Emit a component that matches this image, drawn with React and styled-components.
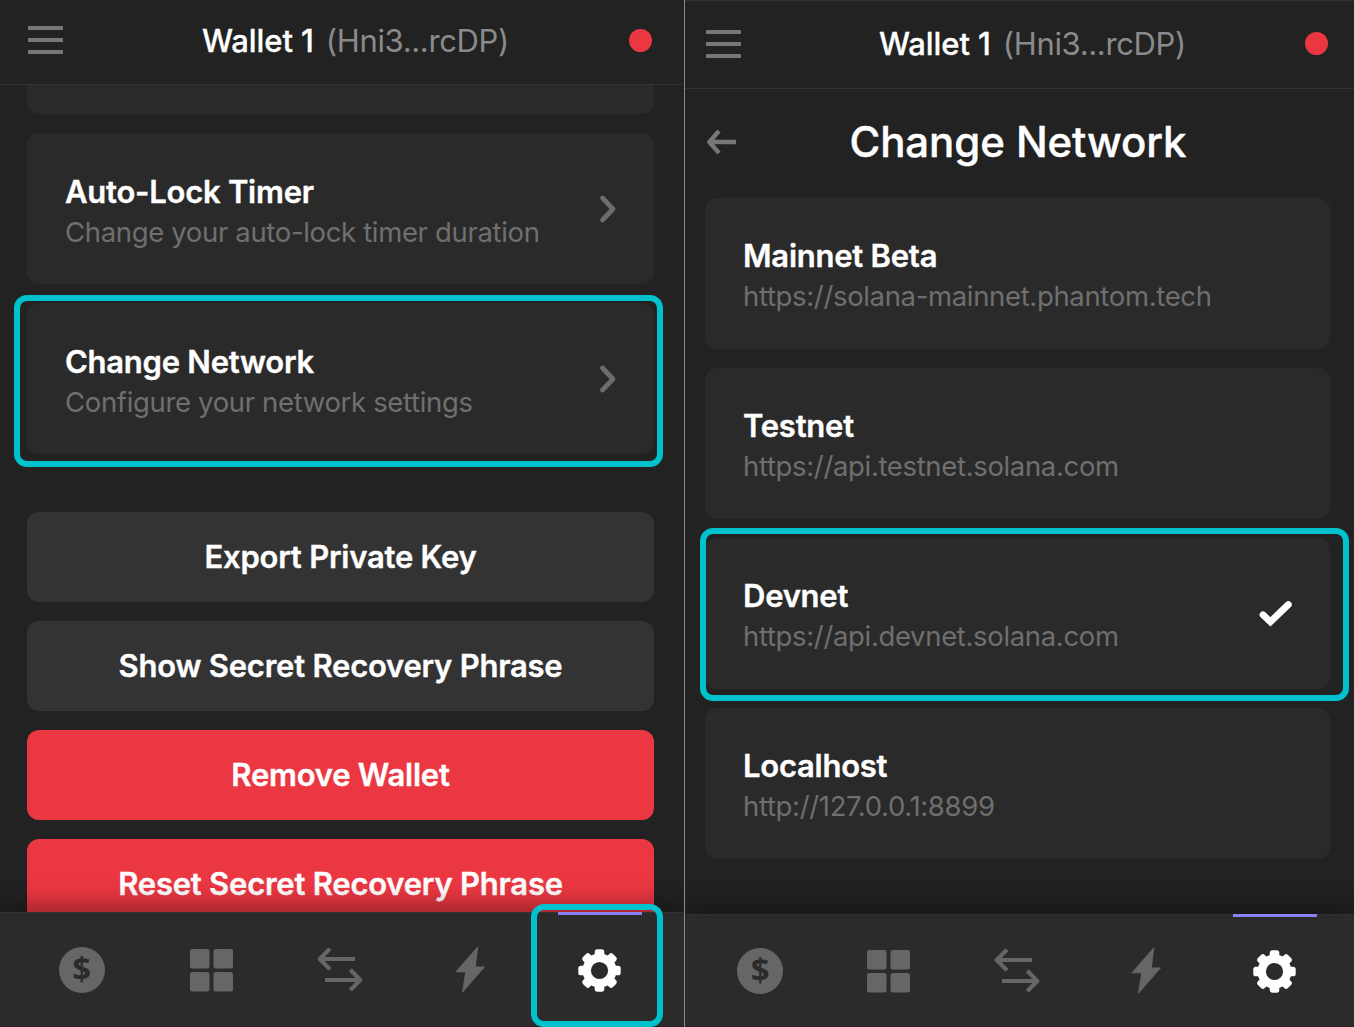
import React from 'react';
import styled, { createGlobalStyle } from 'styled-components';

const GlobalStyle = createGlobalStyle`
  * { box-sizing: border-box; }
  body { margin: 0; background: #222222; overflow: hidden; }
  h1, h2, p { margin: 0; }
  button { border: 0; padding: 0; font: inherit; }
`;

const Screen = styled.main`
  position: relative;
  display: flex;
  width: 1354px;
  height: 1027px;
  background: #222222;
  font-family: Inter, 'Liberation Sans', sans-serif;
  color: #ffffff;
`;

const Panel = styled.section`
  display: flex;
  flex-direction: column;
  width: ${(p) => p.$width}px;
  height: 1027px;
  overflow: hidden;
  border-top: ${(p) => (p.$topLine ? '1px solid #323232' : '0')};
`;

const Divider = styled.div`
  width: 1px;
  background: #8a8a8a;
`;

const Header = styled.header`
  flex: none;
  display: flex;
  align-items: center;
  justify-content: space-between;
  height: ${(p) => p.$height}px;
  padding: ${(p) => p.$padding};
  border-bottom: 1px solid #333333;
`;

const MenuButton = styled.button`
  display: flex;
  flex-direction: column;
  justify-content: space-between;
  width: 35px;
  height: 28px;
  background: none;
`;

const MenuBar = styled.span`
  height: 4px;
  border-radius: 0.5px;
  background: #777777;
`;

const WalletName = styled.div`
  display: flex;
  gap: 12px;
  margin-left: ${(p) => p.$shift}px;
  padding-top: 1px;
  font-size: 31px;
  line-height: 40px;
  font-weight: 500;
  letter-spacing: -0.1px;
  -webkit-text-stroke: 0.3px currentColor;
  white-space: nowrap;
`;

const Address = styled.span`
  font-weight: 400;
  letter-spacing: -0.35px;
  color: #8a8a8a;
  -webkit-text-stroke: 0;
`;

const StatusDot = styled.span`
  width: 23px;
  height: 23px;
  border-radius: 50%;
  background: #eb3742;
`;

const Content = styled.div`
  flex: 1;
  min-height: 0;
  overflow: hidden;
  display: flex;
  flex-direction: column;
  padding: ${(p) => p.$padding};
`;

const PreviousCard = styled.div`
  flex: none;
  height: 29px;
  margin-bottom: 19px;
  border-radius: 0 0 12px 12px;
  background: #2a2a2a;
`;

const CardList = styled.div`
  flex: none;
  display: flex;
  flex-direction: column;
  gap: 19px;
`;

const Card = styled.div`
  display: flex;
  align-items: center;
  justify-content: space-between;
  height: 151px;
  padding: ${(p) => p.$padding};
  border-radius: 12px;
  background: #2a2a2a;
`;

const CardTitle = styled.h2`
  font-size: 31px;
  line-height: 40px;
  font-weight: 600;
  letter-spacing: -0.25px;
  -webkit-text-stroke: 0.35px currentColor;
  white-space: nowrap;
`;

const CardText = styled.p`
  font-size: 27.5px;
  line-height: 41px;
  letter-spacing: -0.34px;
  color: #6f6f6f;
  white-space: nowrap;
`;

const CardIcon = styled.svg`
  flex: none;
  margin-top: -8px;
  overflow: visible;
`;

const Actions = styled.div`
  flex: none;
  display: flex;
  flex-direction: column;
  gap: 19px;
  margin-top: 58px;
`;

const ActionButton = styled.button`
  height: 90px;
  padding-bottom: 2px;
  border-radius: 12px;
  background: ${(p) => (p.$danger ? '#eb3742' : '#333333')};
  color: #ffffff;
  font-size: 31px;
  font-weight: 600;
  letter-spacing: -0.23px;
  -webkit-text-stroke: 0.35px currentColor;
`;

const TitleRow = styled.div`
  flex: none;
  display: grid;
  grid-template-columns: 31px 1fr 31px;
  align-items: center;
  height: 109px;
  padding: 0 0 3px 1px;
`;

const PageTitle = styled.h1`
  font-size: 42px;
  line-height: 50px;
  font-weight: 500;
  letter-spacing: -0.1px;
  -webkit-text-stroke: 0.4px currentColor;
  text-align: center;
`;

const TabBar = styled.nav`
  flex: none;
  position: relative;
  display: grid;
  grid-template-columns: repeat(5, 1fr);
  height: ${(p) => p.$height}px;
  padding: ${(p) => p.$padding};
  border-top: 1px solid #323232;
  border-bottom: 1px solid #222222;
  background: #2b2b2b;
  box-shadow: 0 -10px 20px rgba(0, 0, 0, 0.3);
`;

const Tab = styled.div`
  display: flex;
  align-items: center;
  justify-content: center;
  margin-top: -1px;
  padding-bottom: ${(p) => p.$lift || 0}px;
  border-top: 3px solid transparent;
  border-image: ${(p) =>
    p.$active
      ? 'linear-gradient(90deg, transparent 18%, #8a81f8 18%, #8a81f8 82.2%, transparent 82.2%) 1'
      : 'none'};
`;

const Coin = styled.span`
  display: flex;
  align-items: center;
  justify-content: center;
  width: 46px;
  height: 46px;
  padding-bottom: 2px;
  border-radius: 50%;
  background: #666666;
  color: #2b2b2b;
  font-family: 'Open Sans', sans-serif;
  font-size: 33px;
  line-height: 46px;
  font-weight: 700;
`;

const Highlight = styled.div`
  position: absolute;
  left: ${(p) => p.$x}px;
  top: ${(p) => p.$y}px;
  width: ${(p) => p.$w}px;
  height: ${(p) => p.$h}px;
  border: 6px solid #00c2cd;
  border-radius: 13px;
  pointer-events: none;
`;

const Chevron = () => (
  <CardIcon width="18" height="28" viewBox="0 0 18 28">
    <path d="M3.5 3 L14 14 L3.5 25" fill="none" stroke="#6c6c6c" strokeWidth="4.8" strokeLinecap="round" strokeLinejoin="round" />
  </CardIcon>
);

const Check = () => (
  <CardIcon width="33" height="26" viewBox="0 0 33 26">
    <path d="M4 14.8 L11.4 21.9 L29.4 4.5" fill="none" stroke="#fff" strokeWidth="6.8" strokeLinecap="round" />
  </CardIcon>
);

const BackArrow = () => (
  <svg width="31" height="26" viewBox="0 0 31 26">
    <path d="M30 13 H4 M13 2 L3.3 13 L13 24" fill="none" stroke="#777" strokeWidth="4.4" strokeLinejoin="round" />
  </svg>
);

const GridIcon = () => (
  <svg width="43" height="43" viewBox="0 0 43 43" fill="#666">
    <rect width="19.5" height="19.5" rx="2.5" />
    <rect x="23.5" width="19.5" height="19.5" rx="2.5" />
    <rect y="23" width="19.5" height="19.5" rx="2.5" />
    <rect x="23.5" y="23" width="19.5" height="19.5" rx="2.5" />
  </svg>
);

const SwapIcon = () => (
  <svg width="46" height="44" viewBox="0 0 46 44" fill="none" stroke="#666" strokeWidth="4.2" strokeLinejoin="round">
    <path d="M38 12 H3 M13 1.6 L2.8 12 L13 22.4" />
    <path d="M8 33 H43 M33.3 22.8 L43.2 33 L33.3 43.2" />
  </svg>
);

const BoltIcon = () => (
  <svg width="30" height="47" viewBox="0 0 30 47">
    <path
      d="M22.8 .9 L20.2 21 H29.4 L7.6 46 L10.8 25.8 H1 Z"
      fill="#666"
      stroke="#666"
      strokeWidth="1"
      strokeLinejoin="round"
    />
  </svg>
);

const GearIcon = () => (
  <svg width="43" height="43" viewBox="-21.5 -21.5 43 43">
    {[0, 45, 90, 135].map((angle) => (
      <rect key={angle} x="-4.8" y="-21.2" width="9.6" height="42.4" rx="2.6" fill="#fff" transform={`rotate(${angle})`} />
    ))}
    <circle r="17" fill="#fff" />
    <circle r="8.6" fill="#2b2b2b" />
  </svg>
);

const WalletHeader = ({ height, padding, shift }) => (
  <Header $height={height} $padding={padding}>
    <MenuButton aria-label="Menu">
      <MenuBar />
      <MenuBar />
      <MenuBar />
    </MenuButton>
    <WalletName $shift={shift}>
      Wallet 1 <Address>(Hni3...rcDP)</Address>
    </WalletName>
    <StatusDot />
  </Header>
);

const Item = ({ title, text, icon, padding = '6px 38px 0 38px' }) => (
  <Card $padding={padding}>
    <div>
      <CardTitle>{title}</CardTitle>
      <CardText>{text}</CardText>
    </div>
    {icon}
  </Card>
);

const Tabs = ({ height, padding }) => (
  <TabBar $height={height} $padding={padding}>
    <Tab $lift={2}><Coin>$</Coin></Tab>
    <Tab $lift={1}><GridIcon /></Tab>
    <Tab $lift={4}><SwapIcon /></Tab>
    <Tab $lift={2}><BoltIcon /></Tab>
    <Tab $active $lift={1}><GearIcon /></Tab>
  </TabBar>
);

export default function App() {
  return (
    <>
      <GlobalStyle />
      <Screen>
        <Panel $width={684}>
          <WalletHeader height={85} padding="0 32px 4px 28px" shift={19} />
          <Content $padding="0 30px 0 27px">
            <PreviousCard />
            <CardList>
              <Item title="Auto-Lock Timer" text="Change your auto-lock timer duration" icon={<Chevron />} padding="8px 37px 0 38px" />
              <Item title="Change Network" text="Configure your network settings" icon={<Chevron />} padding="8px 37px 0 38px" />
            </CardList>
            <Actions>
              <ActionButton>Export Private Key</ActionButton>
              <ActionButton>Show Secret Recovery Phrase</ActionButton>
              <ActionButton $danger>Remove Wallet</ActionButton>
              <ActionButton $danger>Reset Secret Recovery Phrase</ActionButton>
            </Actions>
          </Content>
          <Tabs height={115} padding="0 20px 0 17px" />
        </Panel>
        <Divider />
        <Panel $width={669} $topLine>
          <WalletHeader height={88} padding="0 26px 2px 21px" shift={19} />
          <Content $padding="0 24px 0 20px">
            <TitleRow>
              <BackArrow />
              <PageTitle>Change Network</PageTitle>
            </TitleRow>
            <CardList>
              <Item title="Mainnet Beta" text="https://solana-mainnet.phantom.tech" />
              <Item title="Testnet" text="https://api.testnet.solana.com" />
              <Item title="Devnet" text="https://api.devnet.solana.com" icon={<Check />} />
              <Item title="Localhost" text="http://127.0.0.1:8899" />
            </CardList>
          </Content>
          <Tabs height={113} padding="0 15px 0 11px" />
        </Panel>
        <Highlight $x={14} $y={295} $w={649} $h={172} />
        <Highlight $x={531} $y={904} $w={132} $h={123} />
        <Highlight $x={700} $y={528} $w={649} $h={173} />
      </Screen>
    </>
  );
}
